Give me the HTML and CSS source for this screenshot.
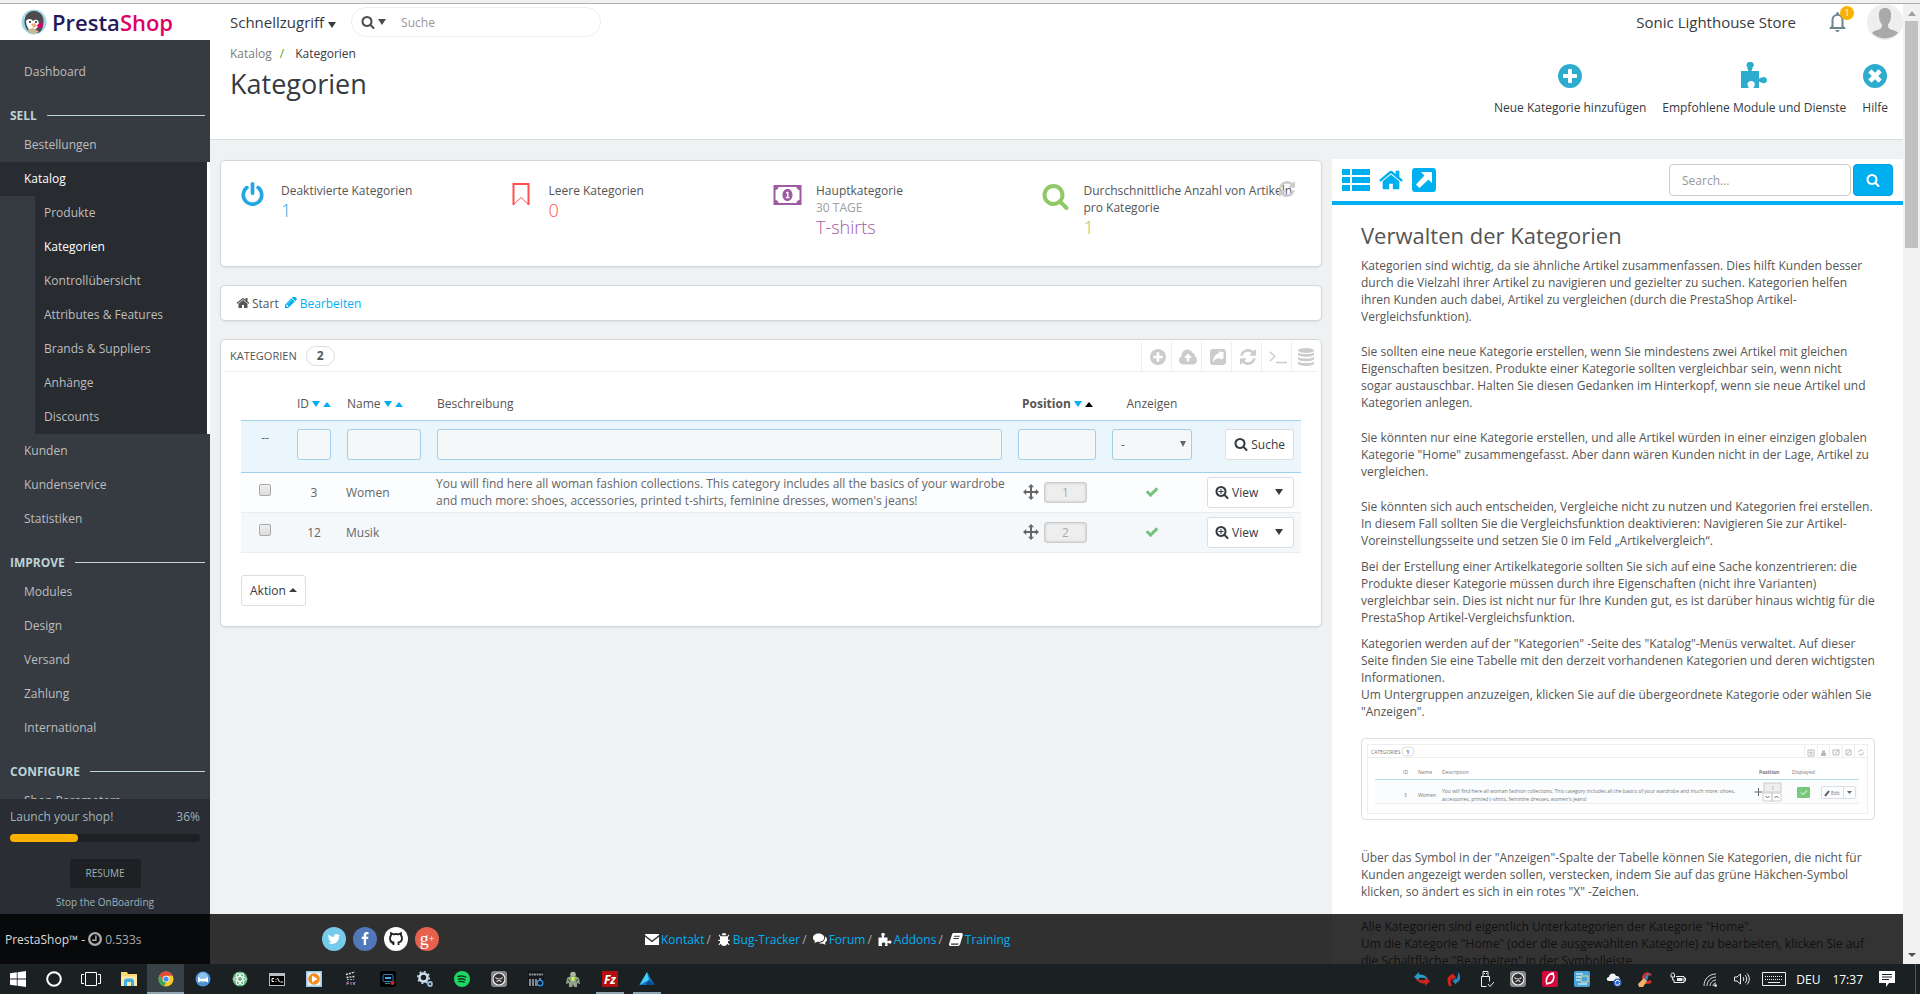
FILE: index.html
```html
<!DOCTYPE html>
<html lang="de">
<head>
  <meta charset="UTF-8">
  <meta name="viewport" content="width=device-width, initial-scale=1.0">
  <title>Kategorien</title>
  <link rel="stylesheet" href="styles.css">
</head>

<body>
<svg class="sprite" aria-hidden="true">
  <symbol id="search" viewBox="0 0 1792 1792"><path d="M1216 832q0-185-131.500-316.500t-316.500-131.500-316.500 131.500-131.500 316.500 131.500 316.500 316.500 131.500 316.500-131.500 131.500-316.500zm512 832q0 52-38 90t-90 38q-54 0-90-38l-343-342q-179 124-399 124-143 0-273.500-55.500t-225-150-150-225-55.500-273.500 55.500-273.500 150-225 225-150 273.500-55.500 273.500 55.500 225 150 150 225 55.500 273.500q0 220-124 399l343 343q37 37 37 90z"/></symbol>
  <symbol id="zoom-in" viewBox="0 0 1792 1792"><path d="M1216 832q0-185-131.500-316.500t-316.500-131.500-316.500 131.500-131.500 316.500 131.500 316.500 316.500 131.500 316.500-131.500 131.500-316.500zm512 832q0 52-38 90t-90 38q-54 0-90-38l-343-342q-179 124-399 124-143 0-273.500-55.500t-225-150-150-225-55.500-273.500 55.500-273.500 150-225 225-150 273.500-55.500 273.500 55.500 225 150 150 225 55.500 273.500q0 220-124 399l343 343q37 37 37 90z"/><path d="M704 500h128v268h254v128H832v254H704V896H450V768h254z"/></symbol>
  <symbol id="home" viewBox="0 0 1792 1792"><path d="M1472 992v480q0 26-19 45t-45 19h-384v-384h-256v384h-384q-26 0-45-19t-19-45v-480q0-1 .5-3t.5-3l575-474 575 474q1 2 1 6zm223-69l-62 74q-8 9-21 11h-3q-13 0-21-7l-692-577-692 577q-12 8-24 7-13-2-21-11l-62-74q-8-10-7-23.500t11-21.500l719-599q32-26 76-26t76 26l244 204v-195q0-14 9-23t23-9h192q14 0 23 9t9 23v408l219 182q10 8 11 21.500t-7 23.500z"/></symbol>
  <symbol id="plus-circle" viewBox="128 128 1536 1536"><path d="M1344 960v-128q0-26-19-45t-45-19h-256v-256q0-26-19-45t-45-19h-128q-26 0-45 19t-19 45v256h-256q-26 0-45 19t-19 45v128q0 26 19 45t45 19h256v256q0 26 19 45t45 19h128q26 0 45-19t19-45v-256h256q26 0 45-19t19-45zm320-64q0 209-103 385.500t-279.500 279.500-385.500 103-385.500-103-279.500-279.500-103-385.500 103-385.500 279.500-279.500 385.500-103 385.500 103 279.500 279.500 103 385.500z"/></symbol>
  <symbol id="refresh" viewBox="128 128 1536 1536"><path d="M1639 1056q0 5-1 7-64 268-268 434.500t-478 166.500q-146 0-282.500-55t-243.500-157l-129 129q-19 19-45 19t-45-19-19-45v-448q0-26 19-45t45-19h448q26 0 45 19t19 45-19 45l-137 137q71 66 161 102t187 36q134 0 250-65t186-179q11-17 53-117 8-23 30-23h192q13 0 22.500 9.500t9.500 22.500zm25-800v448q0 26-19 45t-45 19h-448q-26 0-45-19t-19-45 19-45l138-138q-148-137-349-137-134 0-250 65t-186 179q-11 17-53 117-8 23-30 23h-199q-13 0-22.500-9.500t-9.500-22.500v-7q65-268 270-434.500t480-166.500q146 0 284 55.500t245 156.500l130-129q19-19 45-19t45 19 19 45z"/></symbol>
  <symbol id="check" viewBox="0 0 1792 1792"><path d="M1671 566q0 40-28 68l-724 724-136 136q-28 28-68 28t-68-28l-136-136-362-362q-28-28-28-68t28-68l136-136q28-28 68-28t68 28l294 295 656-657q28-28 68-28t68 28l136 136q28 28 28 68z"/></symbol>
  <symbol id="power" viewBox="128 0 1536 1664"><path d="M1664 896q0 156-61 298t-164 245-245 164-298 61-298-61-245-164-164-245-61-298q0-182 80.500-343t226.500-270q43-32 95.500-25t83.500 50q32 42 24.500 94.500t-49.500 84.500q-98 74-151.500 181t-53.500 228q0 104 40.500 198.500t109.500 163.500 163.500 109.500 198.500 40.500 198.500-40.500 163.500-109.500 109.500-163.500 40.500-198.500q0-121-53.500-228t-151.500-181q-42-32-49.500-84.500t24.500-94.500q31-43 84-50t95 25q146 109 226.500 270t80.500 343zm-640-768v640q0 52-38 90t-90 38-90-38-38-90v-640q0-52 38-90t90-38 90 38 38 90z"/></symbol>
  <symbol id="pencil" viewBox="128 256 1536 1536"><path d="M491 1536l91-91-235-235-91 91v107h128v128h107zm523-928q0-22-22-22-10 0-17 7l-542 542q-7 7-7 17 0 22 22 22 10 0 17-7l542-542q7-7 7-17zm-54-192l416 416-832 832h-416v-416zm683 96q0 53-37 90l-166 166-416-416 166-165q36-38 90-38 53 0 91 38l235 234q37 39 37 91z"/></symbol>
  <symbol id="puzzle" viewBox="0 0 26 26"><path d="M0 9h7.500C7 8 6.300 6.800 6.300 5.600a1 1 0 0 1 .2-.4A3 3 0 0 1 9 0a3 3 0 0 1 2.700 5.200C11.500 6.500 10.800 8 10.500 9H18v7.500c1 0 2-.8 3-1 1.500-1.200 4.800-.3 5 2.500-.1 3-3.300 4-5 2.700-1-.3-2-1-3-1V26h-5.500c0-1 1.300-2 1.300-4 0-1.600-1.500-3-3.600-3s-3.700 1.400-3.700 3c0 2 1.300 3 1.300 4H0z"/></symbol>
  <symbol id="times-circle" viewBox="0 0 24 24"><path fill-rule="evenodd" d="M12 0a12 12 0 1 1 0 24 12 12 0 0 1 0-24zM8.500 5.300L5.300 8.500 8.800 12l-3.500 3.500 3.200 3.200 3.500-3.500 3.500 3.500 3.200-3.200-3.500-3.500 3.500-3.500-3.200-3.200L12 8.800z"/></symbol>
  <symbol id="bell" viewBox="0 0 16 20"><path d="M8 0a2 2 0 0 1 1.500 2.200C12.300 3 14 5 14 8v6l2 2v1H0v-1l2-2V8c0-3 1.700-5 4.500-5.800A2 2 0 0 1 8 0zM4 15h8V8c0-2.600-1.400-4.200-4-4.200S4 5.400 4 8zm2 3h4a2 2 0 0 1-4 0z" fill-rule="evenodd"/></symbol>
  <symbol id="cloud-up" viewBox="0 0 18 15"><path fill-rule="evenodd" d="M4.500 15C2 15 0 13.200 0 10.700 0 9 1 7.500 2.500 6.900 2.300 3 4.800 0 8.300 0c2.500 0 4.300 1.300 5.200 3.600 1.700.1 2.600 1.500 2.300 3.300C17.300 7.500 18 9 18 10.700 18 13.200 16.300 15 14 15zM9 4L5 8.300h2.700V12h2.600V8.300H13z"/></symbol>
  <symbol id="share-sq" viewBox="0 0 16 16"><path fill-rule="evenodd" d="M3 0h10a3 3 0 0 1 3 3v10a3 3 0 0 1-3 3H3a3 3 0 0 1-3-3V3a3 3 0 0 1 3-3zm5 2.500L9.600 4.300C5.500 4.800 3.500 7.500 2.800 13.500c1.400-3 3.400-4.400 7.500-4.600L10 10.500l3.500-1V3z"/></symbol>
  <symbol id="database" viewBox="0 0 16 18"><ellipse cx="8" cy="2.500" rx="8" ry="2.500"/><path d="M0 4.500c2 2 14 2 16 0v2c0 3-16 3-16 0zM0 9c2 2 14 2 16 0v2c0 3-16 3-16 0zm0 4.500c2 2 14 2 16 0v2c0 3.300-16 3.300-16 0z"/></symbol>
  <symbol id="terminal" viewBox="0 0 17 12"><path d="M.7 1l4.800 4.500L.7 10M6.500 11.200H17" fill="none" stroke="currentColor" stroke-width="1.300"/></symbol>
  <symbol id="list" viewBox="0 0 28 22"><path d="M0 0h8v6H0zM10 0h18v6H10zM0 8h8v6H0zM10 8h18v6H10zM0 16h8v6H0zM10 16h18v6H10z"/></symbol>
  <symbol id="ext-link" viewBox="0 0 24 24"><path fill-rule="evenodd" d="M3 0h18a3 3 0 0 1 3 3v18a3 3 0 0 1-3 3H3a3 3 0 0 1-3-3V3a3 3 0 0 1 3-3zm6 4l3.500 3.500L4 16.500 7.500 20l9-8.500L20 15V4z"/></symbol>
  <symbol id="move" viewBox="0 0 16 16"><path d="M8 0l3 3.200H9V7h3.800V5L16 8l-3.200 3V9H9v3.800h2L8 16l-3-3.200h2V9H3.200v2L0 8l3.200-3v2H7V3.200H5z"/></symbol>
  <symbol id="bookmark" viewBox="0 0 20 24"><path d="M3 23V2h15v21" fill="none" stroke="currentColor" stroke-width="2"/><path d="M3 22.500l7.500-7 7.500 7" fill="none" stroke="currentColor"/></symbol>
  <symbol id="money" viewBox="0 0 28 20"><path fill-rule="evenodd" d="M0 0h28v20H0zM5 2c0 1.600-1.500 3-3 3v10c1.500 0 3 1.400 3 3h18c0-1.600 1.500-3 3-3V5c-1.500 0-3-1.400-3-3z"/><path fill-rule="evenodd" d="M14 4c3 0 5 2.700 5 6s-2 6-5 6-5-2.700-5-6 2-6 5-6zm-1.500 3v1.200h.9v3.900h-1.200v1.200h3.900v-1.200H15V6.700h-1z"/></symbol>
  <symbol id="clock" viewBox="0 0 24 24"><circle cx="12" cy="12" r="10" fill="none" stroke="currentColor" stroke-width="4"/><path d="M13.500 6v8H7" fill="none" stroke="currentColor" stroke-width="2.500"/></symbol>
  <symbol id="twitter" viewBox="0 0 1792 1792"><path d="M1684 408q-67 98-162 167 1 14 1 42 0 130-38 259.500t-115.500 248.500-184.500 210.500-258 146-323 54.500q-271 0-496-145 35 4 78 4 225 0 401-138-105-2-188-64.500t-114-159.500q33 5 61 5 43 0 85-11-112-23-185.500-111.500t-73.500-205.500v-4q68 38 146 41-66-44-105-115t-39-154q0-88 44-163 121 149 294.500 238.500t371.500 99.500q-8-38-8-74 0-134 94.500-228.500t228.500-94.500q140 0 236 102 109-21 205-78-37 115-142 178 93-10 186-50z"/></symbol>
  <symbol id="facebook" viewBox="0 0 1792 1792"><path d="M1343 12v264h-157q-86 0-116 36t-30 108v189h293l-39 296h-254v759h-306v-759h-255v-296h255v-218q0-186 104-288.500t277-102.500q147 0 228 12z"/></symbol>
  <symbol id="github" viewBox="0 0 16 16"><path d="M5.500 14v-2.500C3 11 2 9.500 2 7.200c0-1 .3-2 1-2.700V2.200l2.400 1.200c1.600-.5 3.600-.5 5.200 0L13 2.200v2.300c.7.700 1 1.700 1 2.700 0 2.300-1 3.800-3.500 4.300V14" fill="none" stroke="currentColor" stroke-width="1.800"/><path d="M1.800 10.500c1.300 0 1 2.300 3.400 2.300" fill="none" stroke="currentColor"/></symbol>
  <symbol id="mail" viewBox="0 0 14 11"><path d="M0 0h14v1L7 6.500 0 1zM0 2.800l7 5.400 7-5.400V11H0z"/></symbol>
  <symbol id="bug" viewBox="0 0 14 14"><path d="M4.500 2.500a2.500 2.500 0 0 1 5 0zM3.500 3.500h7l1.500-2 .8.600L11.300 4.500v2.700H13v1.300h-1.700v2l1.700 2-.8.800-1.600-1.600C9.800 13.300 8.800 14 7 14s-2.800-.7-3.600-2.300l-1.600 1.600-.8-.8 1.700-2v-2H1V7.200h1.700V4.500L1.200 2.100l.8-.6z"/></symbol>
  <symbol id="chat" viewBox="0 0 15 13"><path d="M6 0c3.300 0 6 2 6 4.500S9.300 9 6 9c-.5 0-1 0-1.400-.1C3.500 9.700 2.300 10 1 10c.7-.6 1.100-1.300 1.200-2C.9 7.200 0 6 0 4.500 0 2 2.700 0 6 0zm7 3.300c1.300.8 2 2 2 3.200 0 1.400-.9 2.600-2.200 3.400.1.800.6 1.400 1.200 2-1.400 0-2.600-.3-3.600-1-1.500.3-3.200 0-4.400-.8C10 10.200 13.300 7.600 13 3.300z"/></symbol>
  <symbol id="book" viewBox="0 0 14 13"><path fill-rule="evenodd" d="M4.500 0H13l1 1.500-3 10-1.300 1.500H1.500C.3 13-.3 12 .2 10.500L3 1.500C3.300.6 3.800 0 4.500 0zM5.300 2.700l-.3 1h5.500l.3-1zM4.600 5l-.3 1h5.500l.3-1zM2 10.500c-.3.800 0 1.200.6 1.200h6.600l.5-1.200z"/></symbol>
</svg>

<div class="window-edge"></div>

<div class="browser">
  <div class="page">

    <aside class="sidebar">
      <a class="logo" href="#">
        <svg class="logo-bird" viewBox="0 0 26 26" aria-hidden="true">
          <circle cx="13" cy="13" r="12.500" fill="#9fd8e8"/>
          <path d="M3.500 13C3.500 6 8 1.500 13.500 2c5.500.4 9 4.500 9 10 0 5-1 9-4 11.500l-9 .5C6 22 3.500 17 3.500 13z" fill="#4f4a4e"/>
          <path d="M5 12c2.500-3 5.500-2 7 0 2-2 4.500-1.500 5.500.5 1 3-.5 5.500-2.500 7.500l-6 1.500C6.500 19 5 15.500 5 12z" fill="#fff"/>
          <circle cx="9" cy="13" r="1" fill="#222"/><circle cx="15" cy="13" r="1" fill="#222"/>
          <path d="M10 15l4-1 2 3-3.500 2z" fill="#e8b08a"/>
          <path d="M16 16l5-3 1 4-4 3z" fill="#df0067"/>
          <path d="M6 21l6-2 6 3.500-5 2.500-4-1z" fill="#c9b795"/>
        </svg>
        <span class="logo-text">Presta<span>Shop</span></span>
      </a>
      <nav class="menu">
        <a href="#">Dashboard</a>
        <h2>SELL</h2>
        <a href="#">Bestellungen</a>
        <a class="open" href="#">Katalog</a>
        <div class="submenu">
          <a href="#">Produkte</a>
          <a class="current" href="#">Kategorien</a>
          <a href="#">Kontrollübersicht</a>
          <a href="#">Attributes &amp; Features</a>
          <a href="#">Brands &amp; Suppliers</a>
          <a href="#">Anhänge</a>
          <a href="#">Discounts</a>
        </div>
        <a href="#">Kunden</a>
        <a href="#">Kundenservice</a>
        <a href="#">Statistiken</a>
        <h2>IMPROVE</h2>
        <a href="#">Modules</a>
        <a href="#">Design</a>
        <a href="#">Versand</a>
        <a href="#">Zahlung</a>
        <a href="#">International</a>
        <h2>CONFIGURE</h2>
        <a href="#">Shop Parameters</a>
      </nav>
      <div class="onboarding">
        <div class="onboarding-title"><span>Launch your shop!</span><span>36%</span></div>
        <div class="progress"><div class="progress-bar" style="width: 36%"></div></div>
        <button class="resume" type="button">RESUME</button>
        <a href="#">Stop the OnBoarding</a>
      </div>
    </aside>

    <div class="main">
      <header class="header">
        <div class="topbar">
          <button class="quick" type="button">Schnellzugriff <i class="down"></i></button>
          <form class="top-search">
            <button type="button" aria-label="Suchbereich"><svg class="i14"><use href="#search"/></svg><i class="down"></i></button>
            <input type="text" placeholder="Suche" aria-label="Suche">
          </form>
          <a class="store" href="#">Sonic Lighthouse Store</a>
          <button class="notif" type="button" aria-label="Benachrichtigungen"><svg><use href="#bell"/></svg><span>1</span></button>
          <a class="avatar" href="#" aria-label="Profil">
            <svg viewBox="0 0 36 36"><circle cx="18" cy="18" r="18" fill="#eee"/><path d="M18 4c4.500 0 6.500 3 6 8 0 4-1.500 6.500-3 8.500 0 3.500 1 4.500 4.500 5.500 2.500.8 4.500 1.500 5.500 3A18 18 0 0 1 5 29c1-1.500 3-2.200 5.500-3 3.500-1 4.500-2 4.500-5.500-1.500-2-3-4.500-3-8.500-.5-5 1.500-8 6-8z" fill="#a9a9a9"/></svg>
          </a>
        </div>
        <div class="page-head">
          <div class="page-title">
            <div class="crumbs"><a href="#">Katalog</a><i>/</i><span>Kategorien</span></div>
            <h1>Kategorien</h1>
          </div>
          <div class="toolbar">
            <a href="#"><svg><use href="#plus-circle"/></svg>Neue Kategorie hinzufügen</a>
            <a href="#"><svg class="puzzle"><use href="#puzzle"/></svg>Empfohlene Module und Dienste</a>
            <a href="#"><svg><use href="#times-circle"/></svg>Hilfe</a>
          </div>
        </div>
      </header>

      <div class="content">
        <main class="panels">
          <section class="panel kpis">
            <div class="kpi blue"><svg class="i24"><use href="#power"/></svg>
              <div><h3>Deaktivierte Kategorien</h3><strong>1</strong></div></div>
            <div class="kpi red"><svg class="i24"><use href="#bookmark"/></svg>
              <div><h3>Leere Kategorien</h3><strong>0</strong></div></div>
            <div class="kpi purple"><svg class="money"><use href="#money"/></svg>
              <div><h3>Hauptkategorie</h3><small>30 TAGE</small><strong>T-shirts</strong></div></div>
            <div class="kpi green"><svg class="i28"><use href="#search"/></svg>
              <div><h3>Durchschnittliche Anzahl von Artikeln pro Kategorie</h3><strong>1</strong></div></div>
            <button class="kpi-refresh" type="button" aria-label="Aktualisieren"><svg class="i16"><use href="#refresh"/></svg></button>
          </section>

          <section class="panel path">
            <svg class="i14"><use href="#home"/></svg><span>Start</span>
            <a href="#"><svg class="i12"><use href="#pencil"/></svg>Bearbeiten</a>
          </section>

          <section class="panel list">
            <div class="panel-heading">
              <h2>KATEGORIEN</h2><span class="badge">2</span>
              <div class="actions">
                <a href="#" aria-label="Neu"><svg class="i16"><use href="#plus-circle"/></svg></a>
                <a href="#" aria-label="Export"><svg class="i18"><use href="#cloud-up"/></svg></a>
                <a href="#" aria-label="Empfohlene Module"><svg class="i16"><use href="#share-sq"/></svg></a>
                <a href="#" aria-label="Aktualisieren"><svg class="i16"><use href="#refresh"/></svg></a>
                <a href="#" aria-label="SQL-Abfrage"><svg class="i18"><use href="#terminal"/></svg></a>
                <a href="#" aria-label="SQL-Manager"><svg class="i18"><use href="#database"/></svg></a>
              </div>
            </div>
            <table>
              <colgroup><col class="c-check"><col class="c-id"><col class="c-name"><col><col class="c-pos"><col class="c-show"><col class="c-act"></colgroup>
              <thead>
                <tr class="titles">
                  <th></th>
                  <th>ID <i class="down"></i><i class="up"></i></th>
                  <th>Name <i class="down"></i><i class="up"></i></th>
                  <th>Beschreibung</th>
                  <th class="sorted">Position <i class="down"></i><i class="up"></i></th>
                  <th class="center">Anzeigen</th>
                  <th></th>
                </tr>
                <tr class="filter">
                  <td class="center">--</td>
                  <td><input type="text" aria-label="ID"></td>
                  <td><input type="text" aria-label="Name"></td>
                  <td><input type="text" aria-label="Beschreibung"></td>
                  <td><input type="text" aria-label="Position"></td>
                  <td><div class="select"><select aria-label="Anzeigen"><option>-</option><option>Ja</option><option>Nein</option></select><i class="down"></i></div></td>
                  <td><button class="btn" type="button"><svg class="i14"><use href="#search"/></svg>Suche</button></td>
                </tr>
              </thead>
              <tbody>
                <tr>
                  <td class="center"><input type="checkbox" aria-label="Women auswählen"></td>
                  <td class="center">3</td>
                  <td>Women</td>
                  <td class="desc">You will find here all woman fashion collections. This category includes all the basics of your wardrobe<br>and much more: shoes, accessories, printed t-shirts, feminine dresses, women's jeans!</td>
                  <td><div class="pos"><svg class="i16"><use href="#move"/></svg><span>1</span></div></td>
                  <td class="center"><svg class="i14 ok"><use href="#check"/></svg></td>
                  <td><div class="btn-group"><button type="button"><svg class="i14"><use href="#zoom-in"/></svg>View</button><button type="button" aria-label="Mehr"><i class="down"></i></button></div></td>
                </tr>
                <tr>
                  <td class="center"><input type="checkbox" aria-label="Musik auswählen"></td>
                  <td class="center">12</td>
                  <td>Musik</td>
                  <td></td>
                  <td><div class="pos"><svg class="i16"><use href="#move"/></svg><span>2</span></div></td>
                  <td class="center"><svg class="i14 ok"><use href="#check"/></svg></td>
                  <td><div class="btn-group"><button type="button"><svg class="i14"><use href="#zoom-in"/></svg>View</button><button type="button" aria-label="Mehr"><i class="down"></i></button></div></td>
                </tr>
              </tbody>
            </table>
            <button class="btn bulk" type="button">Aktion <i class="up"></i></button>
          </section>
        </main>

        <aside class="help">
          <div class="help-bar">
            <a href="#" aria-label="Inhalt"><svg class="help-list"><use href="#list"/></svg></a>
            <a href="#" aria-label="Start"><svg class="i28"><use href="#home"/></svg></a>
            <a href="#" aria-label="Extern öffnen"><svg class="i24"><use href="#ext-link"/></svg></a>
            <form>
              <input type="text" placeholder="Search..." aria-label="Search">
              <button type="button" aria-label="Search"><svg class="i14"><use href="#search"/></svg></button>
            </form>
          </div>
          <article>
            <h2>Verwalten der Kategorien</h2>
            <p class="wide">Kategorien sind wichtig, da sie ähnliche Artikel zusammenfassen. Dies hilft Kunden besser durch die Vielzahl ihrer Artikel zu navigieren und gezielter zu suchen. Kategorien helfen ihren Kunden auch dabei, Artikel zu vergleichen (durch die PrestaShop Artikel-Vergleichsfunktion).</p>
            <p class="wide">Sie sollten eine neue Kategorie erstellen, wenn Sie mindestens zwei Artikel mit gleichen Eigenschaften besitzen. Produkte einer Kategorie sollten vergleichbar sein, wenn nicht sogar austauschbar. Halten Sie diesen Gedanken im Hinterkopf, wenn sie neue Artikel und Kategorien anlegen.</p>
            <p class="wide">Sie könnten nur eine Kategorie erstellen, und alle Artikel würden in einer einzigen globalen Kategorie "Home" zusammengefasst. Aber dann wären Kunden nicht in der Lage, Artikel zu vergleichen.</p>
            <p>Sie könnten sich auch entscheiden, Vergleiche nicht zu nutzen und Kategorien frei erstellen. In diesem Fall sollten Sie die Vergleichsfunktion deaktivieren: Navigieren Sie zur Artikel-Voreinstellungsseite und setzen Sie 0 im Feld „Artikelvergleich“.</p>
            <p>Bei der Erstellung einer Artikelkategorie sollten Sie sich auf eine Sache konzentrieren: die Produkte dieser Kategorie müssen durch ihre Eigenschaften (nicht ihre Varianten) vergleichbar sein. Dies ist nicht nur für Ihre Kunden gut, es ist darüber hinaus wichtig für die PrestaShop Artikel-Vergleichsfunktion.</p>
            <p class="wide">Kategorien werden auf der "Kategorien" -Seite des "Katalog"-Menüs verwaltet. Auf dieser Seite finden Sie eine Tabelle mit den derzeit vorhandenen Kategorien und deren wichtigsten Informationen.<br>Um Untergruppen anzuzeigen, klicken Sie auf die übergeordnete Kategorie oder wählen Sie "Anzeigen".</p>
            <svg class="thumb" viewBox="0 0 514 82">
              <rect x=".5" y=".5" width="513" height="81" rx="4" fill="#fff" stroke="#ddd"/>
              <rect x="6.500" y="6.500" width="500" height="69" fill="none" stroke="#eee"/>
              <path d="M7 19.500h499M14 65.500h484" stroke="#eee"/>
              <path d="M14 42h484v23H14z" fill="#fafcfe"/>
              <path d="M14 41.500h484" stroke="#b5ddf0"/>
              <rect x="41" y="9" width="12" height="9" rx="4" fill="#fff" stroke="#ddd"/>
              <g font-size="6" fill="#777">
                <text x="10" y="16" font-size="5">CATEGORIES</text><text x="45" y="16" font-weight="bold">1</text>
                <text x="42" y="36" font-size="5">ID</text><text x="57" y="36" font-size="5">Name</text><text x="81" y="36" font-size="5">Description</text>
                <text x="398" y="36" font-size="5" font-weight="bold">Position</text><text x="431" y="36" font-size="5">Displayed</text>
                <text x="43" y="59" font-size="5">3</text><text x="57" y="59" font-size="5">Women</text>
                <text x="81" y="55" font-size="5">You will find here all woman fashion collections. This category includes all the basics of your wardrobe and much more: shoes,</text>
                <text x="81" y="63" font-size="5">accessories, printed t-shirts, feminine dresses, women's jeans!</text>
                <text x="470" y="57" font-size="5">Edit</text>
              </g>
              <g fill="#fff" stroke="#ccc"><rect x="403" y="45" width="17" height="9" fill="#eee"/><path d="M402 55h9v8h-9zM411 55h9v8h-9z"/></g>
              <path d="M404.500 58l2 2 2-2M413.500 60l2-2 2 2" fill="none" stroke="#666"/>
              <path d="M486 53h5l-2.500 3z" fill="#666"/>
              <text x="410" y="52" font-size="6" fill="#aaa">1</text>
              <path d="M397.500 50v8M393.500 54h8" stroke="#666"/>
              <rect x="436" y="49" width="13" height="11" rx="1" fill="#78c97b"/><path d="M440 54.500l2 2 4-4" fill="none" stroke="#fff"/>
              <rect x="460.500" y="48.500" width="34" height="12" rx="1" fill="none" stroke="#ddd"/><path d="M482.500 49v11" stroke="#ddd"/><path d="M464 58l4-5" stroke="#555" stroke-width="2"/>
              <path d="M443.500 7v12M456.500 7v12M468.500 7v12M481.500 7v12M493.500 7v12" stroke="#eee"/>
              <g fill="none" stroke="#bbb"><path d="M447 12h6v6h-6zM450 13v4M448 15h4M472 12h6v5h-6zM474 16l4-5M485 12h5v5h-5zM486 16l3-3"/><path d="M460 16.500h5M461 14h3" stroke-width="3"/><circle cx="500" cy="14.500" r="2.500" stroke-dasharray="6 2"/></g>
            </svg>
            <p class="wide">Über das Symbol in der "Anzeigen"-Spalte der Tabelle können Sie Kategorien, die nicht für Kunden angezeigt werden sollen, verstecken, indem Sie auf das grüne Häkchen-Symbol klicken, so ändert es sich in ein rotes "X" -Zeichen.</p>
            <p>Alle Kategorien sind eigentlich Unterkategorien der Kategorie "Home".<br>Um die Kategorie "Home" (oder die ausgewählten Kategorie) zu bearbeiten, klicken Sie auf die Schaltfläche "Bearbeiten" in der Symbolleiste.</p>
          </article>
        </aside>
      </div>
    </div>

    <footer class="footer">
      <div class="version">PrestaShop™ - <svg class="i14"><use href="#clock"/></svg> <span>0.533s</span></div>
      <div class="social">
        <a class="tw" href="#" aria-label="Twitter"><svg class="i14"><use href="#twitter"/></svg></a>
        <a class="fb" href="#" aria-label="Facebook"><svg class="i14"><use href="#facebook"/></svg></a>
        <a class="gh" href="#" aria-label="GitHub"><svg class="i16"><use href="#github"/></svg></a>
        <a class="gp" href="#">g<sup>+</sup></a>
      </div>
      <div class="links">
        <svg><use href="#mail"/></svg><a href="#">Kontakt</a><i>/</i>
        <svg><use href="#bug"/></svg><a href="#">Bug-Tracker</a><i>/</i>
        <svg><use href="#chat"/></svg><a href="#">Forum</a><i>/</i>
        <svg><use href="#puzzle"/></svg><a href="#">Addons</a><i>/</i>
        <svg><use href="#book"/></svg><a href="#">Training</a>
      </div>
    </footer>
  </div>

  <div class="scrollbar"><i class="up"></i><div class="thumb-bar"></div><i class="down"></i></div>
</div>

<div class="taskbar">
  <div class="tasks">
    <button class="sys" aria-label="Start"><svg viewBox="0 0 16 16"><path d="M0 2.300L6.800 1.300v6.200H0zM7.600 1.200L16 0v7.500H7.600zM0 8.400h6.800v6.300L0 13.700zM7.600 8.400H16V16l-8.400-1.200z" fill="#fff"/></svg></button>
    <button class="sys" aria-label="Cortana"><svg viewBox="0 0 16 16"><circle cx="8" cy="8" r="6.800" fill="none" stroke="#fff" stroke-width="2"/></svg></button>
    <button class="sys" aria-label="Taskansicht"><svg class="view" viewBox="0 0 20 16"><path d="M4.500 1.500h11v13h-11zM3 3.500H.5v9H3M17 3.500h2.500v9H17" fill="none" stroke="#fff"/></svg></button>
    <button aria-label="Explorer"><svg viewBox="0 0 16 16"><path d="M0 1h6l1 2h9v12H0z" fill="#f7d774"/><path d="M0 5h16v10H0z" fill="#fde9a5"/><path d="M3 15V9l2-1.500h6L13 9v6h-3v-4H6v4z" fill="#3fb0e6"/></svg></button>
    <button class="active" aria-label="Chrome"><svg viewBox="0 0 16 16"><circle cx="8" cy="8" r="7.500" fill="#f7c92b"/><path d="M1.500 4.200A7.500 7.500 0 0 1 14.700 4.700H8L5 9.500z" fill="#e04a3a"/><path d="M1.500 4.200L5 10l3 1.500-2 3.700A7.500 7.500 0 0 1 1.500 4.200z" fill="#3aa757"/><circle cx="8" cy="8" r="3.300" fill="#fff"/><circle cx="8" cy="8" r="2.600" fill="#4a8af4"/></svg></button>
    <button aria-label="Browser"><svg viewBox="0 0 16 16"><circle cx="8" cy="8" r="7.500" fill="#4c93d3"/><circle cx="8" cy="6.500" r="5" fill="#8dc3ee"/><path d="M3 6c2 1 2 2 5 2s3-1 5-2v5c-1 1-2-1-3-1H6c-1 0-2 2-3 1z" fill="#fff"/></svg></button>
    <button aria-label="Atom"><svg viewBox="0 0 16 16"><circle cx="8" cy="8" r="7.500" fill="#5fb57d"/><g fill="none" stroke="#fff"><ellipse cx="8" cy="8" rx="6" ry="2.400"/><ellipse cx="8" cy="8" rx="6" ry="2.400" transform="rotate(60 8 8)"/><ellipse cx="8" cy="8" rx="6" ry="2.400" transform="rotate(120 8 8)"/></g></svg></button>
    <button aria-label="Eingabeaufforderung"><svg viewBox="0 0 16 16"><path d="M0 2h16v13H0z" fill="#b9bfc4"/><path d="M1 5h14v9H1z" fill="#000"/><path d="M5 7.500H3v3h2M7 8v.8M7 10v.8M8.500 7l2 4M11.500 11H14" fill="none" stroke="#fff"/></svg></button>
    <button aria-label="Media Player"><svg viewBox="0 0 16 16"><path d="M0 0h16v16H0z" fill="#9cc8e8"/><path d="M1.500 1.500h13v13h-13z" fill="#e9f3fa"/><circle cx="8" cy="8" r="5.800" fill="#f68b1f"/><path d="M6 4.500L11.500 8 6 11.500z" fill="#fff"/></svg></button>
    <button aria-label="Video"><svg viewBox="0 0 16 16"><path d="M3 3.500l9-2.500M3.500 6.500l8-1" stroke="#ddd" stroke-width="1.500" stroke-dasharray="2 1"/><path d="M4 8.500h7" stroke="#aaa" stroke-dasharray="2 1"/><path d="M4 14v-3h2M8 11v3M10 11l1 3 1-3" fill="none" stroke="#9a7fd0"/><path d="M4 12.500h2" stroke="#e47a3c"/></svg></button>
    <button aria-label="Recorder"><svg viewBox="0 0 16 16"><rect width="16" height="16" rx="2" fill="#020304"/><rect x="3" y="3.500" width="10" height="7" rx="1" fill="none" stroke="#2f7fb5"/><path d="M5 6h6v2H5z" fill="#4aa8f0"/><path d="M5 12.500h5" stroke="#2f7fb5"/><circle cx="12.500" cy="12" r="2" fill="#c22"/></svg></button>
    <button aria-label="Dienste"><svg viewBox="0 0 16 16"><circle cx="6.500" cy="6.500" r="4" fill="none" stroke="#cfe0ee" stroke-width="2.500"/><circle cx="6.500" cy="6.500" r="5.800" fill="none" stroke="#cfe0ee" stroke-width="1.500" stroke-dasharray="2 2.500"/><circle cx="13" cy="13" r="2" fill="none" stroke="#9ebbd2" stroke-width="1.800"/></svg></button>
    <button aria-label="Spotify"><svg viewBox="0 0 16 16"><circle cx="8" cy="8" r="8" fill="#1ed760"/><path d="M3.500 5.700c3-1 6.500-.7 9 .8M4 8.300c2.500-.8 5.500-.5 7.600.7M4.500 10.700c2-.6 4.300-.4 6.200.6" fill="none" stroke="#10301c" stroke-width="1.400"/></svg></button>
    <button aria-label="Kamera"><svg viewBox="0 0 16 16"><rect width="16" height="16" rx="3" fill="#858585"/><circle cx="8" cy="8" r="6" fill="#333" stroke="#eee" stroke-width="1.200"/><path d="M4.500 6.500c1 2 6 2 7 0M6 11c0-2 4-2 4 0" fill="none" stroke="#ddd" stroke-width="1.200"/></svg></button>
    <button aria-label="Audio"><svg viewBox="0 0 16 16"><path d="M0 0h16v16H0z" fill="#15181b"/><path d="M1 3.500h14" stroke="#8a9299" stroke-width="2" stroke-dasharray="2 .5"/><path d="M2 8v7M5 8v7M8 8v7M12 7v3" stroke="#a8b0b8" stroke-width="1.500"/><circle cx="12" cy="12" r="2.800" fill="#15181b" stroke="#2f8de0" stroke-width="1.500"/></svg></button>
    <button aria-label="Spiel"><svg viewBox="0 0 16 16"><circle cx="8" cy="3.500" r="2.800" fill="#a9b8a0"/><path d="M2 7l4-2h4l4 2 1 6-3-1v4H9l-1-3-1 3H4v-4l-3 1z" fill="#8fa58c"/><path d="M6 6h4l-1 4H7z" fill="#d8f04a"/><path d="M3 8l2 3M13 8l-2 3" stroke="#38473a"/></svg></button>
    <button class="running" aria-label="FileZilla"><svg viewBox="0 0 16 16"><path d="M0 0h16v16H0z" fill="#b30f0f"/><text x="2" y="13" font-size="12" font-weight="bold" font-style="italic" fill="#fff">Fz</text></svg></button>
    <button class="running" aria-label="Affinity"><svg viewBox="0 0 16 16"><path d="M8 1l7.500 13H.5z" fill="#1673c4"/><path d="M8 1l2 8-9.500 5z" fill="#43d0f4"/><path d="M10 9l5.500 5h-9z" fill="#0a4b93"/></svg></button>
  </div>
  <div class="tray">
    <button aria-label="Sync"><svg viewBox="0 0 16 16"><path d="M0 6l5-5v2.500c4 0 7 1 9.500 5C11 7 8 6.500 5 7v3z" fill="#2a9cc4"/><path d="M16 10l-5 5v-2.500c-4 0-7-1-9.500-5C5 9 8 9.500 11 9V6z" fill="#d0241c"/></svg></button>
    <button aria-label="Update"><svg viewBox="0 0 16 16"><path d="M3 15C0 9 2 4 6 3.500V2l4 4-4 3V7C4.500 9 4 12 6 15z" fill="#d0241c"/><path d="M12 1c4 5 2 10-2 11v1.500L6.500 10 10 7v1.500c2-2 2-5 2-7.500z" fill="#2a84c4"/></svg></button>
    <button aria-label="USB"><svg viewBox="0 0 16 16"><path d="M5 5V.5h5V5M3.500 5.500h8v5M3.500 5.500v10h5M10 13l2 2.500L16 11M6.500 2v1M8.500 2v1" fill="none" stroke="#eee"/></svg></button>
    <button aria-label="Kamera"><svg viewBox="0 0 16 16"><rect width="16" height="16" rx="3" fill="#858585"/><circle cx="8" cy="8" r="6" fill="#333" stroke="#eee" stroke-width="1.200"/><path d="M4.500 6.500c1 2 6 2 7 0M6 11c0-2 4-2 4 0" fill="none" stroke="#ddd" stroke-width="1.200"/></svg></button>
    <button aria-label="Avira"><svg viewBox="0 0 16 16"><rect width="16" height="16" rx="2" fill="#d3093c"/><path d="M5 13c-2-5 1-10 6-11 2 5 0 10-4 10z" fill="none" stroke="#fff" stroke-width="1.600"/></svg></button>
    <button aria-label="Intel"><svg viewBox="0 0 16 16"><rect width="16" height="16" rx="2" fill="#46a3dc"/><path d="M2 3h7M2 6h5M2 9h4M4 13h9" stroke="#c5e6f7" stroke-width="1.400"/><path d="M7 5h7v6H7z" fill="none" stroke="#e9d98a"/></svg></button>
    <button aria-label="OneDrive"><svg viewBox="0 0 16 16"><path d="M3 10C0 10 0 6 3 6c0-4 6-5 7-1 4-1 5 5 2 5z" fill="#f2f2f2"/><circle cx="11.500" cy="11.500" r="4" fill="#2b66c4"/><path d="M9.500 11.500a2 2 0 0 1 4-.5M13.500 12a2 2 0 0 1-4 .5" fill="none" stroke="#fff"/></svg></button>
    <button aria-label="Cleaner"><svg viewBox="0 0 16 16"><path d="M14 4C11-1 4 1 4 7s6 8 10 4l-2-2c-2 2-5 1-5-2s3-4 5-2z" fill="#d5301f"/><path d="M0 13l6-6 3 3-4 6H1z" fill="#e9b36b"/><path d="M6 7l4-5 1 1-2 7z" fill="#3d7fc0"/></svg></button>
    <button aria-label="Akku"><svg viewBox="0 0 16 16"><path d="M6 5.500h8v6H4V9M14 7h1.500v3H14M1 3v3h3.500V3M2 1.500V3M3.700 1.500V3M2.700 6v3H4" fill="none" stroke="#eee"/><path d="M7 7h5.500v3H7z" fill="#eee"/></svg></button>
    <button aria-label="WLAN"><svg viewBox="0 0 16 16"><path d="M2 15C2 8 7 3 14 3M5 15c0-5 4-9 9-9M8 15c0-3 3-6 6-6M11 15c0-2 1.500-3 3-3" fill="none" stroke="#ddd"/><circle cx="13.500" cy="14.500" r="1.300" fill="#fff"/></svg></button>
    <button aria-label="Lautstärke"><svg viewBox="0 0 16 16"><path d="M.5 6H3l3.500-3v10L3 10H.5zM9 6c1 1 1 3 0 4M11 4c2.200 2 2.200 6 0 8M13 2.500c3 3 3 8 0 11" fill="none" stroke="#eee"/></svg></button>
    <button class="keyboard" aria-label="Tastatur"><svg class="keys" viewBox="0 0 24 16"><path d="M.5 1.500h23v13H.5z" fill="none" stroke="#eee"/><path d="M3 5.500h18M3 8.500h18" stroke="#eee" stroke-dasharray="1 1"/><path d="M6 11.500h12" stroke="#eee"/></svg></button>
    <span>DEU</span>
    <span>17:37</span>
    <button class="notes" aria-label="Info-Center"><svg viewBox="0 0 16 16"><path d="M0 0h16v12H10l-3 4v-4H0z" fill="#fff"/><path d="M3 3.500h10M3 6h10M3 8.500h7" stroke="#1b2023"/></svg></button>
  </div>
</div>
</body>
</html>
```
FILE: styles.css
```css
* { box-sizing: border-box; }

body { margin: 0; height: 100vh; display: flex; flex-direction: column; overflow: hidden; background: #eff1f2; color: #555; font: 12px/17px "Open Sans", sans-serif; }

a { color: #00aff0; text-decoration: none; }
button, input, select { font: inherit; color: inherit; margin: 0; }
button { background: none; border: none; padding: 0; }
h1, h2, h3, p { margin: 0; font-weight: normal; }
i { font-style: normal; }
svg { fill: currentColor; display: block; flex: none; }

.sprite { position: absolute; width: 0; height: 0; }
.i12 { width: 12px; height: 12px; }
.i14 { width: 14px; height: 14px; }
.i16 { width: 16px; height: 16px; }
.i18 { width: 18px; height: 18px; }
.i24 { width: 24px; height: 24px; }
.i28 { width: 28px; height: 28px; }

/* small sort and dropdown arrows */
.down, .up { display: inline-block; border: 4px solid transparent; }
.down { border-top: 6px solid; border-bottom: 0; }
.up { border-bottom: 5px solid; border-top: 0; }

.window-edge { height: 4px; flex: none; background: #f0f0f0; border-bottom: 1px solid #b0b0b0; }
.browser { flex: 1; min-height: 0; display: flex; }
.page { flex: 1; min-width: 0; display: flex; position: relative; overflow: hidden; }

/* sidebar */
.sidebar { width: 210px; flex: none; display: flex; flex-direction: column; background: #363a41; }
.logo { height: 36px; flex: none; display: flex; align-items: center; gap: 5px; padding-left: 21px; background: #fff; }
.logo-bird { width: 26px; height: 26px; }
.logo-text { color: #251b5b; font-size: 22px; line-height: 24px; font-weight: 600; }
.logo-text span { color: #df0067; }
.menu { flex: 1; min-height: 0; overflow: hidden; padding-top: 15px; }
.menu a { display: block; padding-left: 24px; line-height: 34px; color: #bebebe; }
.menu h2 { display: flex; align-items: center; gap: 10px; height: 26px; margin: 13px 5px 0 10px; color: #bdd3d8; font-size: 12px; font-weight: 700; }
.menu h2::after { content: ""; flex: 1; height: 1px; background: #bdd3d8; }
.menu .open { background: #282b30; color: #fff; border-right: 3px solid #fff; }
.submenu { margin-left: 35px; background: #282b30; border-right: 3px solid #fff; }
.submenu a { padding-left: 9px; }
.submenu .current { color: #fff; }
.onboarding { height: 165px; flex: none; padding: 9px 10px; background: #2b2d35; color: #9eb3b8; text-align: center; }
.onboarding-title { display: flex; justify-content: space-between; }
.progress { height: 8px; margin-top: 9px; border-radius: 4px; background: #1f2023; }
.progress-bar { height: 8px; border-radius: 4px; background: #fbb100; }
.resume { display: block; width: 71px; height: 29px; margin: 17px auto 5px; border-radius: 3px; background: #1f2023; font-size: 10px; }
.onboarding a { font-size: 10px; color: inherit; }

/* header */
.main { flex: 1; min-width: 0; }
.header { height: 136px; background: #fff; border-bottom: 1px solid #d8dde0; color: #363a41; }
.topbar { display: flex; align-items: center; height: 36px; padding-left: 20px; }
.quick { font-size: 15px; }
.top-search { display: flex; align-items: center; height: 30px; margin: 0 auto 0 15px; border: 1px solid #eee; border-radius: 15px; padding: 0 10px 0 9px; }
.top-search button { display: flex; align-items: center; gap: 3px; color: #4c4c4c; }
.top-search input { width: 189px; margin-left: 15px; border: none; outline: none; background: none; padding: 0; }
::placeholder { color: #999; opacity: 1; }
.store { color: #363a41; font-size: 15px; }
.notif { position: relative; margin: 0 21px 0 33px; color: #6c868e; }
.notif svg { width: 17px; height: 20px; }
.notif span { position: absolute; left: 11px; top: -6px; width: 14px; height: 14px; border-radius: 50%; background: #fbb100; color: #fff; font-size: 9px; line-height: 14px; }
.avatar svg { width: 36px; height: 36px; }
.page-head { display: flex; justify-content: space-between; padding: 5px 15px 0 20px; }
.crumbs a { color: #7d7d7d; }
.crumbs i { margin: 0 11px 0 8px; color: #5f9e25; }
.page-title h1 { margin-top: 5px; font-size: 27px; line-height: 34px; }
.toolbar { display: flex; gap: 16px; padding-top: 17px; }
.toolbar a { display: flex; flex-direction: column; align-items: center; justify-content: flex-end; gap: 11px; height: 54px; color: #363a41; }
.toolbar svg { width: 24px; height: 24px; color: #2eacce; }
.toolbar .puzzle { width: 26px; height: 26px; }

/* content */
.content { display: flex; align-items: flex-start; padding: 20px 0 0 10px; }
.panels { flex: 1; min-width: 0; display: flex; flex-direction: column; gap: 18px; }
.panel { background: #fff; border: 1px solid #d3d8db; border-radius: 5px; box-shadow: 0 1px 2px rgba(0, 0, 0, .08); }
.kpis { position: relative; display: flex; height: 107px; padding: 21px 15px 0; }
.kpi { flex: 1; display: flex; align-items: flex-start; }
.kpi > svg { width: 33px; margin: 0 12px 0 0; }
.kpi > .money { height: 20px; margin-top: 3px; }
.kpi > div { flex: 1; }
.kpi h3 { color: #555; font-size: 12px; }
.kpi small { display: block; color: #a0a0a0; font-size: 12px; }
.kpi strong { display: block; font-size: 18px; line-height: 22px; font-weight: 300; }
.blue { color: #25a6e4; }
.red { color: #ff4e4e; }
.purple { color: #9e5ba1; }
.green { color: #8fc965; }
.kpi-refresh { position: absolute; top: 20px; right: 26px; color: #ccc; }
.path { display: flex; align-items: center; gap: 2px; height: 36px; padding-left: 15px; }
.path a { display: flex; align-items: center; gap: 3px; margin-left: 4px; }

.list { min-height: 288px; padding: 0 4px; }
.panel-heading { display: flex; align-items: center; height: 32px; padding-left: 5px; border-bottom: 1px solid #eee; }
.panel-heading h2 { font-size: 11px; }
.badge { width: 29px; height: 20px; margin-left: 9px; border: 1px solid #ddd; border-radius: 10px; text-align: center; font-weight: 700; line-height: 18px; }
.actions { display: flex; align-self: flex-end; margin-left: auto; }
.actions a { display: flex; align-items: center; justify-content: center; width: 30px; height: 29px; padding-left: 2px; border-left: 1px solid #eee; color: #ccc; }
.actions a:last-child { width: 26px; }

table { width: calc(100% - 32px); margin: 16px 16px 22px; border-collapse: collapse; table-layout: fixed; }
.c-check { width: 48px; }
.c-id { width: 50px; }
.c-name { width: 90px; }
.c-pos { width: 94px; }
.c-show { width: 96px; }
.c-act { width: 101px; }
th, td { padding: 2px 8px; text-align: left; font-weight: normal; }
td { color: #666; }
td:last-child { padding: 0 7px; }
th .down, th .up { margin-right: 3px; color: #00aff0; vertical-align: 1px; }
th .up { margin-right: 0; }
th { white-space: nowrap; }
.titles th { height: 32px; }
.sorted { padding-left: 12px; font-weight: 700; }
.sorted .up { color: #000; }
.center { text-align: center; }
.filter { height: 52px; background: #ebf5fc; border: solid #a0d0eb; border-width: 1px 0; }
.filter td { padding-top: 8px; vertical-align: top; }
.filter td:last-child { text-align: right; }
.filter input, .filter select { display: block; width: 100%; height: 31px; padding: 0 8px; border: 1px solid #a0d0eb; border-radius: 3px; background: #f5f8f9; appearance: none; outline: none; }
.select { position: relative; }
.select .down { position: absolute; right: 6px; top: 12px; border-width: 6px 3px 0; pointer-events: none; }
.btn { display: inline-flex; align-items: center; gap: 3px; height: 31px; padding: 0 8px; border: 1px solid #ddd; border-radius: 3px; background: #fff; color: #363a41; }
tbody tr { height: 40px; background: #fcfdfe; border-bottom: 1px solid #eaedef; }
tbody tr:nth-child(2) { background: #f4f8fb; }
tbody td:nth-child(3), tbody td:nth-child(4) { padding-left: 7px; }
.desc { white-space: nowrap; }
input[type=checkbox] { appearance: none; display: block; width: 12px; height: 12px; margin: 0 auto 5px; border: 1px solid #aaa; border-radius: 2px; background: linear-gradient(#eee, #ddd); }
.pos { display: flex; align-items: center; gap: 5px; padding-left: 5px; }
.pos span { width: 43px; height: 21px; border: 1px solid #ccc; border-radius: 3px; background: #eee; box-shadow: inset 0 0 3px rgba(0, 0, 0, .2); color: #aaa; text-align: center; line-height: 19px; }
.ok { margin: 0 auto; color: #72c279; }
.btn-group { display: flex; height: 31px; border: 1px solid #ddd; border-radius: 3px; background: #fff; color: #363a41; }
.btn-group button { display: flex; align-items: center; gap: 3px; padding-left: 7px; }
.btn-group button + button { margin-left: auto; padding: 0 10px; }
.bulk { margin-left: 16px; }
.bulk .up { border-bottom-width: 4px; }

/* help column */
.help { width: 571px; flex: none; margin: -1px 0 0 10px; background: #fff; }
.help-bar { display: flex; align-items: center; gap: 8px; height: 46px; padding: 0 10px; border-bottom: 4px solid #00aff0; }
.help-list { width: 28px; height: 22px; }
.help-bar .i28 { width: 26px; }
.help-bar form { display: flex; gap: 2px; margin-left: auto; }
.help-bar input { width: 182px; height: 32px; padding: 0 12px; border: 1px solid #ccc; border-radius: 4px; outline: none; }
.help-bar button { width: 40px; height: 32px; display: flex; align-items: center; justify-content: center; border: 1px solid #00a0dc; border-radius: 4px; background: #00aff0; color: #fff; }
.help article { padding: 15px 28px 0 29px; }
.help h2 { margin-bottom: 7px; font-size: 22px; line-height: 30px; }
.help p { margin-bottom: 9px; }
.help .wide { margin-bottom: 18px; }
.thumb { width: 100%; margin-bottom: 29px; }

/* footer lies over the page */
.footer { position: absolute; left: 0; right: 0; bottom: 0; display: flex; align-items: center; height: 50px; background: rgba(0, 0, 0, .8); color: #aaa; }
.version { display: flex; align-items: center; gap: 3px; width: 322px; padding-left: 5px; color: #ddd; }
.version span, .version svg { color: #aaa; }
.social { display: flex; gap: 7px; margin-right: 206px; }
.social a { display: flex; align-items: center; justify-content: center; width: 24px; height: 24px; border-radius: 50%; color: #fff; }
.tw { background: #76cbea; }
.fb { background: #5178b8; }
.social .gh { background: #fff; color: #222; }
.gp { background: #e6614c; font-family: "Liberation Serif", serif; font-size: 18px; }
.gp sup { font-size: 10px; line-height: 10px; }
.links { display: flex; align-items: center; gap: 2px; }
.links svg { width: 14px; height: 13px; color: #fff; }
.links i { margin-right: 4px; }

.scrollbar { width: 17px; flex: none; display: flex; flex-direction: column; align-items: center; padding: 7px 0; background: #f1f1f1; }
.scrollbar .up { color: #a3a3a3; }
.scrollbar .down { margin-top: auto; border-top-width: 4px; color: #505050; }
.thumb-bar { width: 13px; height: 227px; margin-top: 5px; background: #c1c1c1; }

/* taskbar */
.taskbar { display: flex; justify-content: space-between; height: 30px; flex: none; background: #1b2023; color: #fff; }
.tasks, .tray { display: flex; }
.tasks button { display: flex; align-items: center; justify-content: center; width: 37px; }
.tasks .sys { width: 36px; }
.tasks .sys + .sys + .sys { width: 38px; }
.taskbar svg { width: 16px; height: 16px; }
.taskbar .view { width: 20px; }
.taskbar .keys { width: 24px; }
.tasks .active { background: #384246; box-shadow: inset 0 -2px #8fa7b3; }
.tasks .running { background: linear-gradient(#8fa7b3, #8fa7b3) center bottom / 28px 2px no-repeat; }
.tray { align-items: center; gap: 16px; margin-right: 4px; padding-right: 20px; border-right: 1px solid #555; }
.tray .keyboard { margin: 0 -2px 0 -4px; }
.tray span { margin-left: -4px; }
```
